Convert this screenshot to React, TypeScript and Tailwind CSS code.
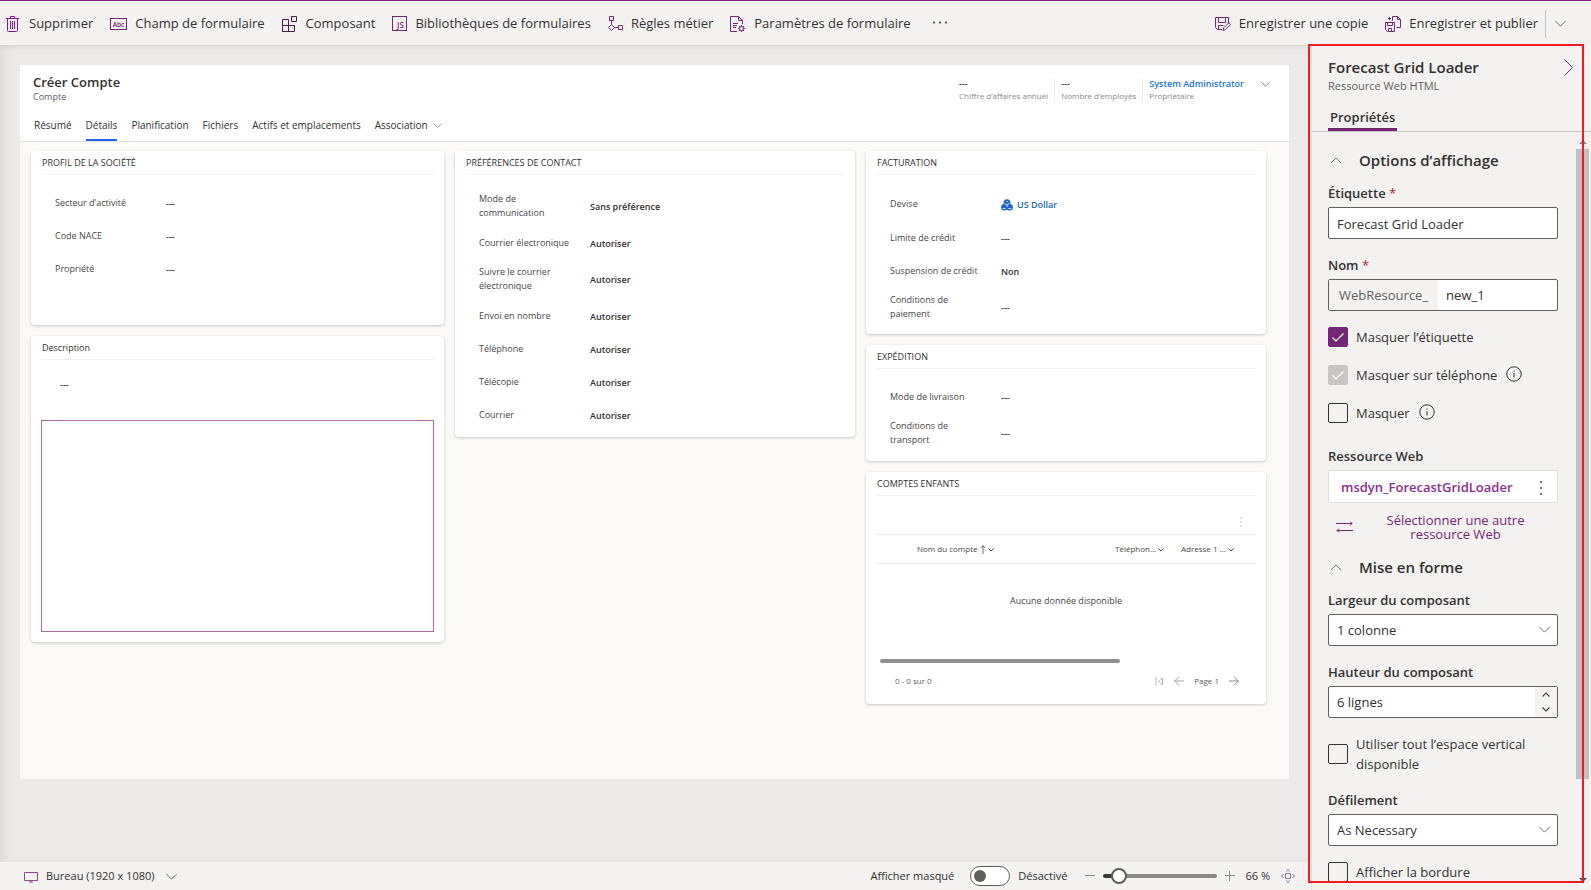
import { useState } from 'react';
import type { ReactNode } from 'react';

type IconProps = {
  children: ReactNode;
  className?: string;
  box?: string;
};

type FieldProps = {
  label: string;
  value?: ReactNode;
  className?: string;
};

type CheckFieldProps = {
  id: string;
  label: string;
  defaultChecked?: boolean;
  disabled?: boolean;
  info?: boolean;
};

const Icon = ({ children, className = 'size-4', box = '0 0 16 16' }: IconProps) => (
  <svg viewBox={box} fill="none" stroke="currentColor" className={`shrink-0 ${className}`} aria-hidden="true">
    {children}
  </svg>
);

const ChevronDown = ({ className = 'h-[7px] w-[13px] text-[#605e5c]' }: { className?: string }) => (
  <Icon box="0 0 14 8" className={className}>
    <path d="M1 1l6 6 6-6" />
  </Icon>
);

const TrashIcon = () => (
  <Icon className="h-4 w-[15px] text-[#881798]" box="0 0 15 16">
    <path d="M0 2.5h13M4.5 2.5v-2h4v2M1.5 2.5v12q0 1 1 1h8q1 0 1-1v-12M4.5 5v8M6.5 5v8M8.5 5v8" />
  </Icon>
);

const FieldIcon = () => (
  <svg viewBox="0 0 17 12" className="h-3 w-[17px] shrink-0" aria-hidden="true">
    <rect x=".5" y=".5" width="16" height="11" fill="none" stroke="#742774" />
    <text x="8.5" y="8.5" textAnchor="middle" fontSize="6.5" fontWeight="600" fill="#742774" fontFamily="Open Sans">
      Abc
    </text>
  </svg>
);

const ComponentIcon = () => (
  <Icon className="size-4 text-[#4b1a50]">
    <path d="M.5 3.5h6v12h-6zM.5 9.5h12v6h-12zM9.5.5h5v5h-5z" />
  </Icon>
);

const ScriptIcon = () => (
  <svg viewBox="0 0 15 15" className="size-[15px] shrink-0" aria-hidden="true">
    <rect x=".5" y=".5" width="14" height="14" fill="none" stroke="#742774" />
    <text x="8.5" y="12" textAnchor="middle" fontSize="8" fontWeight="600" fill="#742774" fontFamily="Open Sans">
      JS
    </text>
  </svg>
);

const RulesIcon = () => (
  <Icon className="size-[15px] text-[#742774]" box="0 0 15 15">
    <path d="M1.5.5h4v4h-4zM3.5 4.5v4M3.5 8.5l3 3-3 3-3-3zM6.5 11.5h4M10.5 9.5h4v4h-4z" />
  </Icon>
);

const SettingsIcon = () => (
  <Icon className="size-4 text-[#742774]">
    <path d="M7 15.5H.5V.5h8l4 4V8M8.5.5v4h4M3 7.5h5M3 9.5h4M3 11.5h3" />
    <circle cx="11.5" cy="12.5" r="2" />
    <path d="M11.5 9v1.5M11.5 14.5V16M8 12.5h1.5M13.5 12.5H15M9 10l1 1M13 14l1 1M14 10l-1 1M10 14l-1 1" />
  </Icon>
);

const SaveCopyIcon = () => (
  <Icon className="size-4 text-[#742774]">
    <path d="M7 13.5H2.5l-2-2v-10h13V7M3.5 1.5v5h7v-5M3.5 13.5v-4h5M8 14.5l.7-2.7 5-5 1.8 1.8-5 5z" />
  </Icon>
);

const PublishIcon = () => (
  <Icon className="size-4 text-[#742774]">
    <path d="M.5 6.5h9v9h-7l-2-2zM2.5 6.5v3h5v-3M3.5 15.5v-3h3v3M7.5 4.5v-4h5l3 3v8h-4M12.5.5v3h3M3 2.5h3M4.5 1v3" />
  </Icon>
);

const commands = [
  { label: 'Supprimer', icon: <TrashIcon /> },
  { label: 'Champ de formulaire', icon: <FieldIcon /> },
  { label: 'Composant', icon: <ComponentIcon /> },
  { label: 'Bibliothèques de formulaires', icon: <ScriptIcon /> },
  { label: 'Règles métier', icon: <RulesIcon /> },
  { label: 'Paramètres de formulaire', icon: <SettingsIcon /> }
];

const CommandBar = () => (
  <header className="flex h-[45px] shrink-0 items-center border-t border-[#742774] bg-[#f3f2f1] pt-px pr-6 pl-[6px] text-[13px] text-[#323130]">
    <div className="flex items-center gap-[17px]">
      {commands.map((command) => (
        <button key={command.label} type="button" className="flex items-center gap-2 whitespace-nowrap">
          {command.icon}
          {command.label}
        </button>
      ))}
      <button type="button" aria-label="Autres commandes" className="ml-1">
        <Icon className="h-4 w-[18px] text-[#605e5c]" box="0 0 18 16">
          <path d="M1 6.5h2M7 6.500h2M13 6.500h2" strokeWidth="2" />
        </Icon>
      </button>
    </div>
    <div className="ml-auto flex items-center gap-[17px] whitespace-nowrap">
      <button type="button" className="flex items-center gap-2">
        <SaveCopyIcon />
        Enregistrer une copie
      </button>
      <div className="flex items-center">
        <button type="button" className="flex items-center gap-2 pr-[7px]">
          <PublishIcon />
          Enregistrer et publier
        </button>
        <button type="button" aria-label="Options de publication" className="flex h-7 items-center border-l border-[#c8c6c4] pl-2">
          <ChevronDown />
        </button>
      </div>
    </div>
  </header>
);

const tabs = ['Résumé', 'Détails', 'Planification', 'Fichiers', 'Actifs et emplacements'];

const RecordHeader = () => (
  <div className="border-b border-[#e1dfdd] bg-white">
    <div className="flex items-start justify-between pt-[9px] pr-[18px] pl-[13px]">
      <div>
        <h1 className="text-[13px] leading-[17px] font-semibold text-[#323130]">Créer Compte</h1>
        <p className="text-[9px] leading-3 text-[#605e5c]">Compte</p>
      </div>
      <div className="flex pt-1 text-[8px] leading-3 text-[#8a8886]">
        <div className="border-r border-[#edebe9] pr-[6px]">
          <p className="text-[9px] font-semibold text-[#323130]">---</p>
          <p>Chiffre d’affaires annuel</p>
        </div>
        <div className="border-r border-[#edebe9] px-[6px]">
          <p className="text-[9px] font-semibold text-[#323130]">---</p>
          <p>Nombre d’employés</p>
        </div>
        <div className="pl-[6px]">
          <a href="#owner" className="block text-[9px] font-semibold text-[#1a73e8]">
            System Administrator
          </a>
          <p>Propriétaire</p>
        </div>
        <button type="button" aria-label="Développer l’en-tête" className="ml-4 flex h-3 items-center">
          <ChevronDown className="h-[6px] w-[11px] text-[#605e5c]" />
        </button>
      </div>
    </div>
    <nav className="flex gap-[14px] pt-2 pl-[14px] text-[10px] text-[#323130]">
      {tabs.map((tab) => (
        <button
          key={tab}
          type="button"
          className={`h-[30px] border-b-2 ${tab === 'Détails' ? 'border-[#2266e3]' : 'border-transparent'}`}>
          {tab}
        </button>
      ))}
      <button type="button" className="flex h-[30px] items-center gap-[5px] border-b-2 border-transparent">
        Association
        <ChevronDown className="h-[5px] w-[9px] text-[#605e5c]" />
      </button>
    </nav>
  </div>
);

const Card = ({ title, children, className = '' }: { title: string; children: ReactNode; className?: string }) => (
  <section className={`rounded-sm bg-white px-[10px] shadow-[0_1px_3px_rgba(0,0,0,0.2)] ${className}`}>
    <h2 className="h-6 border-b border-[#f3f2f1] pl-px text-[9px] leading-6 text-[#323130]">{title}</h2>
    {children}
  </section>
);

const Field = ({ label, value = '---', className = 'h-[33px]' }: FieldProps) => (
  <div className={`flex items-center pl-[14px] text-[9px] leading-[14px] ${className}`}>
    <dt className="w-[111px] shrink-0 pr-5 text-[#484644]">{label}</dt>
    <dd className="pt-[2px] font-semibold text-[#323130]">{value}</dd>
  </div>
);

const CurrencyLink = () => (
  <a href="#currency" className="flex items-center gap-1 text-[#2266c3]">
    <svg viewBox="0 0 12 12" className="size-3 shrink-0" aria-hidden="true">
      <g fill="#2266c3">
        <circle cx="6" cy="3.7" r="3.5" />
        <circle cx="3.4" cy="8.3" r="3.3" />
        <circle cx="8.6" cy="8.3" r="3.3" />
      </g>
      <path d="M3.500 4.500L6 5.800l2.500-1.300M1.800 9.500h2.800M7.400 9.500h2.800M6 6v2M5.500 2.500h1.500" stroke="#fff" strokeWidth=".8" fill="none" />
    </svg>
    US Dollar
  </a>
);

const SmallChevron = () => (
  <Icon box="0 0 6 4" className="inline-block h-1 w-[6px] align-middle">
    <path d="M.5.5L3 3 5.500.5" />
  </Icon>
);

const ChildAccounts = () => (
  <Card title="COMPTES ENFANTS" className="pb-[13px]">
    <div className="flex h-[39px] items-center justify-end border-b border-[#edebe9] pt-[14px] pr-[10px]">
      <button type="button" aria-label="Plus de commandes">
        <Icon box="0 0 10 10" className="size-[10px] text-[#c8c6c4]">
          <path d="M5 0v2M5 4v2M5 8v2" />
        </Icon>
      </button>
    </div>
    <table className="w-full table-fixed text-[8px] text-[#484644]">
      <thead>
        <tr className="h-7 border-b border-[#edebe9] text-left whitespace-nowrap">
          <th className="pl-[41px] font-medium">
            Nom du compte{' '}
            <Icon box="0 0 6 9" className="inline-block h-[9px] w-[6px]">
              <path d="M3 9V.7M.8 3L3 .7 5.200 3" strokeWidth=".8" />
            </Icon>{' '}
            <SmallChevron />
          </th>
          <th className="w-[66px] font-medium">
            Téléphon... <SmallChevron />
          </th>
          <th className="w-[75px] font-medium">
            Adresse 1 ... <SmallChevron />
          </th>
        </tr>
      </thead>
      <tbody>
        <tr className="h-[74px]">
          <td colSpan={3} className="text-center text-[9px]">
            Aucune donnée disponible
          </td>
        </tr>
      </tbody>
    </table>
    <div className="mt-[22px] mr-[136px] ml-1 h-1 rounded-full bg-[#919191]" />
    <div className="mt-2 flex h-5 items-center gap-[10px] pr-[17px] pl-[19px] text-[8px] text-[#605e5c]">
      <span className="mr-auto">0 - 0 sur 0</span>
      <button type="button" aria-label="Première page">
        <Icon box="0 0 9 9" className="size-[9px] text-[#a19f9d]">
          <path d="M1 .5v8M7.500 1v7L3.500 4.500z" strokeWidth=".8" />
        </Icon>
      </button>
      <button type="button" aria-label="Page précédente">
        <Icon box="0 0 10 10" className="size-[10px] text-[#a19f9d]">
          <path d="M10 5H.7M5 .7L.7 5 5 9.300" />
        </Icon>
      </button>
      <span>Page 1</span>
      <button type="button" aria-label="Page suivante">
        <Icon box="0 0 10 10" className="size-[10px] text-[#8a8886]">
          <path d="M0 5h9.300M5 .7L9.300 5 5 9.300" />
        </Icon>
      </button>
    </div>
  </Card>
);

const FormCanvas = () => (
  <div className="flex-1 bg-[#ebeae8] pt-5 pr-[22px] pl-5 shadow-[inset_8px_0_12px_-4px_rgba(0,0,0,0.06),inset_0_4px_6px_-3px_rgba(0,0,0,0.08)]">
    <div className="bg-[#faf9f8] pb-[75px]">
      <RecordHeader />
      <div className="grid grid-cols-[413fr_400fr_400fr] items-start gap-[11px] pt-[9px] pr-[23px] pl-[11px]">
        <div className="flex flex-col gap-[11px]">
          <Card title="PROFIL DE LA SOCIÉTÉ" className="pb-10">
            <dl className="pt-[11px]">
              <Field label="Secteur d’activité" />
              <Field label="Code NACE" />
              <Field label="Propriété" />
            </dl>
          </Card>
          <Card title="Description" className="pb-[10px]">
            <p className="flex h-[60px] items-center pb-[10px] pl-[19px] text-[9px] font-semibold text-[#323130]">---</p>
            <div className="h-[212px] border border-[#a66aa8]" />
          </Card>
        </div>
        <Card title="PRÉFÉRENCES DE CONTACT" className="pb-[6px]">
          <dl className="pt-[11px]">
            <Field label="Mode de communication" value="Sans préférence" className="h-10" />
            <Field label="Courrier électronique" value="Autoriser" />
            <Field label="Suivre le courrier électronique" value="Autoriser" className="h-10" />
            <Field label="Envoi en nombre" value="Autoriser" />
            <Field label="Téléphone" value="Autoriser" />
            <Field label="Télécopie" value="Autoriser" />
            <Field label="Courrier" value="Autoriser" />
          </dl>
        </Card>
        <div className="flex flex-col gap-[11px]">
          <Card title="FACTURATION" className="pb-[7px]">
            <dl className="pt-[11px]">
              <Field label="Devise" value={<CurrencyLink />} className="h-[35px]" />
              <Field label="Limite de crédit" />
              <Field label="Suspension de crédit" value="Non" />
              <Field label="Conditions de paiement" className="h-10" />
            </dl>
          </Card>
          <Card title="EXPÉDITION" className="pb-2">
            <dl className="pt-[11px]">
              <Field label="Mode de livraison" />
              <Field label="Conditions de transport" className="h-10" />
            </dl>
          </Card>
          <ChildAccounts />
        </div>
      </div>
    </div>
  </div>
);

const StatusBar = () => {
  const [showHidden, setShowHidden] = useState(false);
  const [zoom, setZoom] = useState(66);

  return (
    <footer className="flex h-7 shrink-0 items-center bg-[#f3f2f1] pr-4 pl-6 text-[11px] whitespace-nowrap text-[#323130]">
      <button type="button" className="mr-auto flex items-center pt-px">
        <Icon box="0 0 14 12" className="h-3 w-[14px] text-[#8f4a92]">
          <path d="M.5 1.500h13v8H.5zM5 11h4M7 9.500V11" />
        </Icon>
        <span className="mr-[10px] ml-2">Bureau (1920 x 1080)</span>
        <ChevronDown />
      </button>
      <span id="show-hidden" className="pt-px">
        Afficher masqué
      </span>
      <button
        type="button"
        role="switch"
        aria-checked={showHidden}
        aria-labelledby="show-hidden"
        onClick={() => setShowHidden(!showHidden)}
        className={`mr-2 ml-4 flex h-5 w-10 items-center rounded-full border border-[#605e5c] bg-white px-[3px] ${showHidden ? 'justify-end' : ''}`}>
        <span className="size-3 rounded-full bg-[#605e5c]" />
      </button>
      <span className="pt-px">{showHidden ? 'Activé' : 'Désactivé'}</span>
      <button type="button" aria-label="Zoom arrière" onClick={() => setZoom(zoom - 1)} className="mr-2 ml-[18px]">
        <Icon box="0 0 10 10" className="size-[10px] text-[#8a8886]">
          <path d="M0 4.500h10" />
        </Icon>
      </button>
      <input
        type="range"
        aria-label="Zoom"
        min={50}
        max={250}
        value={zoom}
        onChange={(e) => setZoom(Number(e.target.value))}
        className="h-1 w-[114px] appearance-none rounded-full bg-[linear-gradient(to_right,#3b3a39_14%,#8a8886_14%)] [&::-webkit-slider-thumb]:size-4 [&::-webkit-slider-thumb]:appearance-none [&::-webkit-slider-thumb]:rounded-full [&::-webkit-slider-thumb]:border-2 [&::-webkit-slider-thumb]:border-[#605e5c] [&::-webkit-slider-thumb]:bg-white"
      />
      <button type="button" aria-label="Zoom avant" onClick={() => setZoom(zoom + 1)} className="mr-[10px] ml-2">
        <Icon box="0 0 10 10" className="size-[10px] text-[#8a8886]">
          <path d="M0 4.500h10M4.500 0v10" />
        </Icon>
      </button>
      <span className="pt-px">{zoom} %</span>
      <button type="button" aria-label="Ajuster à la fenêtre" className="ml-[11px]">
        <Icon box="0 0 14 14" className="size-[14px] text-[#8378a8]">
          <path d="M4.500 4.500h5v5h-5zM5 2.500L7 .7l2 1.800M5 11.500l2 1.800 2-1.800M2.500 5L.7 7l1.800 2M11.500 5l1.800 2-1.800 2" />
        </Icon>
      </button>
    </footer>
  );
};

const SectionTitle = ({ title }: { title: string }) => (
  <h3>
    <button type="button" aria-expanded="true" className="flex h-5 items-center gap-[17px] pl-[2px] text-[15px] font-semibold text-[#323130]">
      <Icon box="0 0 14 8" className="h-[7px] w-3 text-[#605e5c]">
        <path d="M1 7l6-6 6 6" />
      </Icon>
      {title}
    </button>
  </h3>
);

const Label = ({ id, children, required }: { id: string; children: ReactNode; required?: boolean }) => (
  <label htmlFor={id} className="block leading-5 font-semibold">
    {children}
    {required && <span className="font-normal text-[#a4262c]"> *</span>}
  </label>
);

const CheckField = ({ id, label, defaultChecked, disabled, info }: CheckFieldProps) => (
  <div className="flex items-center">
    <span className="relative size-5 shrink-0">
      <input
        id={id}
        type="checkbox"
        defaultChecked={defaultChecked}
        disabled={disabled}
        className="peer block size-5 appearance-none rounded-xs border border-[#323130] checked:border-[#742774] checked:bg-[#742774] disabled:border-[#c8c6c4] disabled:bg-[#c8c6c4]"
      />
      <Icon className="pointer-events-none absolute inset-0 hidden size-5 text-white peer-checked:block" box="0 0 20 20">
        <path d="M4.500 10.500l3.500 3.500 7.500-7.500" strokeWidth="1.2" />
      </Icon>
    </span>
    <label htmlFor={id} className="ml-2 leading-5">
      {label}
    </label>
    {info && (
      <button type="button" aria-label="Informations" className="ml-[9px] pb-[2px]">
        <Icon className="size-4 text-[#323130]">
          <circle cx="8" cy="8" r="7.2" />
          <path d="M8 7v4.500M8 4.500v1.200" />
        </Icon>
      </button>
    )}
  </div>
);

const SelectField = ({ id, label, options }: { id: string; label: string; options: string[] }) => (
  <div>
    <Label id={id}>{label}</Label>
    <div className="relative mt-1">
      <select id={id} className="block h-8 w-full appearance-none rounded-xs border border-[#605e5c] bg-white px-2 pt-px">
        {options.map((option) => (
          <option key={option}>{option}</option>
        ))}
      </select>
      <ChevronDown className="pointer-events-none absolute top-3 right-[7px] h-[7px] w-[13px] text-[#605e5c]" />
    </div>
  </div>
);

const PropertyPanel = () => {
  const [lines, setLines] = useState(6);

  return (
    <aside className="relative flex w-[280px] shrink-0 flex-col border-l border-[#e1dfdd] bg-[#f3f2f1] pb-2 text-[13px] text-[#323130]">
      <div className="flex items-start justify-between pt-3 pr-[18px] pl-4">
        <div>
          <h2 className="text-[15px] leading-5 font-semibold">Forecast Grid Loader</h2>
          <p className="text-[11px] leading-[18px] text-[#605e5c]">Ressource Web HTML</p>
        </div>
        <button type="button" aria-label="Réduire le volet" className="pt-[2px]">
          <Icon box="0 0 9 17" className="h-[17px] w-[9px] text-[#742774]">
            <path d="M.5.500l8 8-8 8" />
          </Icon>
        </button>
      </div>
      <div className="mt-[10px] border-b border-[#c8c6c4] pl-4">
        <button type="button" className="block h-[26px] border-b-3 border-[#742774] px-[2px] pt-[2px] font-semibold">
          Propriétés
        </button>
      </div>
      <div className="flex min-h-0 flex-1">
        <div className="flex-1 overflow-hidden pt-[18px] pr-[18px] pl-4">
          <SectionTitle title="Options d’affichage" />
          <div className="mt-[13px] flex flex-col gap-4">
            <div>
              <Label id="label" required>
                Étiquette
              </Label>
              <input id="label" defaultValue="Forecast Grid Loader" className="mt-1 block h-8 w-full rounded-xs border border-[#605e5c] bg-white px-2 pt-[2px]" />
            </div>
            <div>
              <Label id="name" required>
                Nom
              </Label>
              <div className="mt-1 flex h-8 rounded-xs border border-[#605e5c] bg-white">
                <span className="flex items-center bg-[#f3f2f1] px-[10px] pt-px text-[#605e5c]">WebResource_</span>
                <input id="name" defaultValue="new_1" className="w-0 flex-1 px-2 pt-[2px]" />
              </div>
            </div>
            <div className="flex flex-col gap-[18px]">
              <CheckField id="hide-label" label="Masquer l’étiquette" defaultChecked />
              <CheckField id="hide-phone" label="Masquer sur téléphone" defaultChecked disabled info />
              <CheckField id="hide" label="Masquer" info />
            </div>
          </div>
          <p className="mt-[23px] leading-5 font-semibold">Ressource Web</p>
          <div className="mt-1 flex h-[33px] items-center justify-between rounded-xs border border-[#e1dfdd] bg-white pt-[2px] pr-[11px] pl-3 text-[#742774]">
            <a href="#webresource" className="font-semibold text-[#8a2f8f]">
              msdyn_ForecastGridLoader
            </a>
            <button type="button" aria-label="Actions">
              <Icon box="0 0 10 14" className="h-[14px] w-[10px]">
                <path d="M5 0v2M5 6v2M5 12v2" strokeWidth="1.500" />
              </Icon>
            </button>
          </div>
          <button type="button" className="mt-[10px] flex w-full items-center pl-2 leading-[14px] text-[#742774]">
            <Icon className="size-[17px]" box="0 0 17 17">
              <path d="M0 4.500h16M14 2.500l2 2-2 2M17 11.500H1M3 9.500l-2 2 2 2" />
            </Icon>
            <span className="flex-1 px-6 text-center">Sélectionner une autre ressource Web</span>
          </button>
          <div className="mt-4">
            <SectionTitle title="Mise en forme" />
          </div>
          <div className="mt-[13px] flex flex-col gap-4">
            <SelectField id="width" label="Largeur du composant" options={['1 colonne', '2 colonnes']} />
            <div>
              <Label id="height">Hauteur du composant</Label>
              <div className="mt-1 flex h-8 rounded-xs border border-[#605e5c] bg-white">
                <input id="height" value={`${lines} lignes`} readOnly className="w-0 flex-1 px-2 pt-[2px]" />
                <div className="flex w-[22px] flex-col bg-[#f3f2f1] text-[#484644]">
                  <button type="button" aria-label="Augmenter" onClick={() => setLines(lines + 1)} className="flex flex-1 items-center justify-center">
                    <Icon box="0 0 8 5" className="h-[5px] w-2">
                      <path d="M.5 4.500L4 1l3.500 3.500" strokeWidth="1.2" />
                    </Icon>
                  </button>
                  <button type="button" aria-label="Diminuer" onClick={() => setLines(lines - 1)} className="flex flex-1 items-center justify-center">
                    <Icon box="0 0 8 5" className="h-[5px] w-2">
                      <path d="M.5.500L4 4 7.500.5" strokeWidth="1.2" />
                    </Icon>
                  </button>
                </div>
              </div>
            </div>
            <CheckField id="full-height" label="Utiliser tout l’espace vertical disponible" />
            <SelectField id="scroll" label="Défilement" options={['As Necessary', 'Always', 'Never']} />
            <CheckField id="border" label="Afficher la bordure" />
          </div>
        </div>
        {/* Scroll bar */}
        <div className="mr-[2px] flex w-[13px] flex-col items-center justify-between bg-[#f1f1f1]">
          <Icon box="0 0 8 4" className="mt-2 h-1 w-2 text-[#8a8886]">
            <path d="M0 4l4-4 4 4z" fill="currentColor" stroke="none" />
          </Icon>
          <div className="mt-[5px] mb-auto h-[84%] w-full bg-[#c1c1c1]" />
          <Icon box="0 0 8 4" className="h-1 w-2 text-[#484644]">
            <path d="M0 0l4 4 4-4z" fill="currentColor" stroke="none" />
          </Icon>
        </div>
      </div>
      {/* Highlight frame */}
      <div className="pointer-events-none absolute -top-px right-[7px] bottom-[7px] -left-1 border-2 border-[#ed1c24]" />
    </aside>
  );
};

const App = () => {
  return (
    <div className="flex h-screen flex-col overflow-hidden bg-[#f3f2f1] font-['Open_Sans','Noto_Sans',sans-serif]">
      <CommandBar />
      <div className="flex min-h-0 flex-1">
        <main className="flex min-w-0 flex-1 flex-col">
          <FormCanvas />
          <StatusBar />
        </main>
        <PropertyPanel />
      </div>
    </div>
  );
};

export default App;
